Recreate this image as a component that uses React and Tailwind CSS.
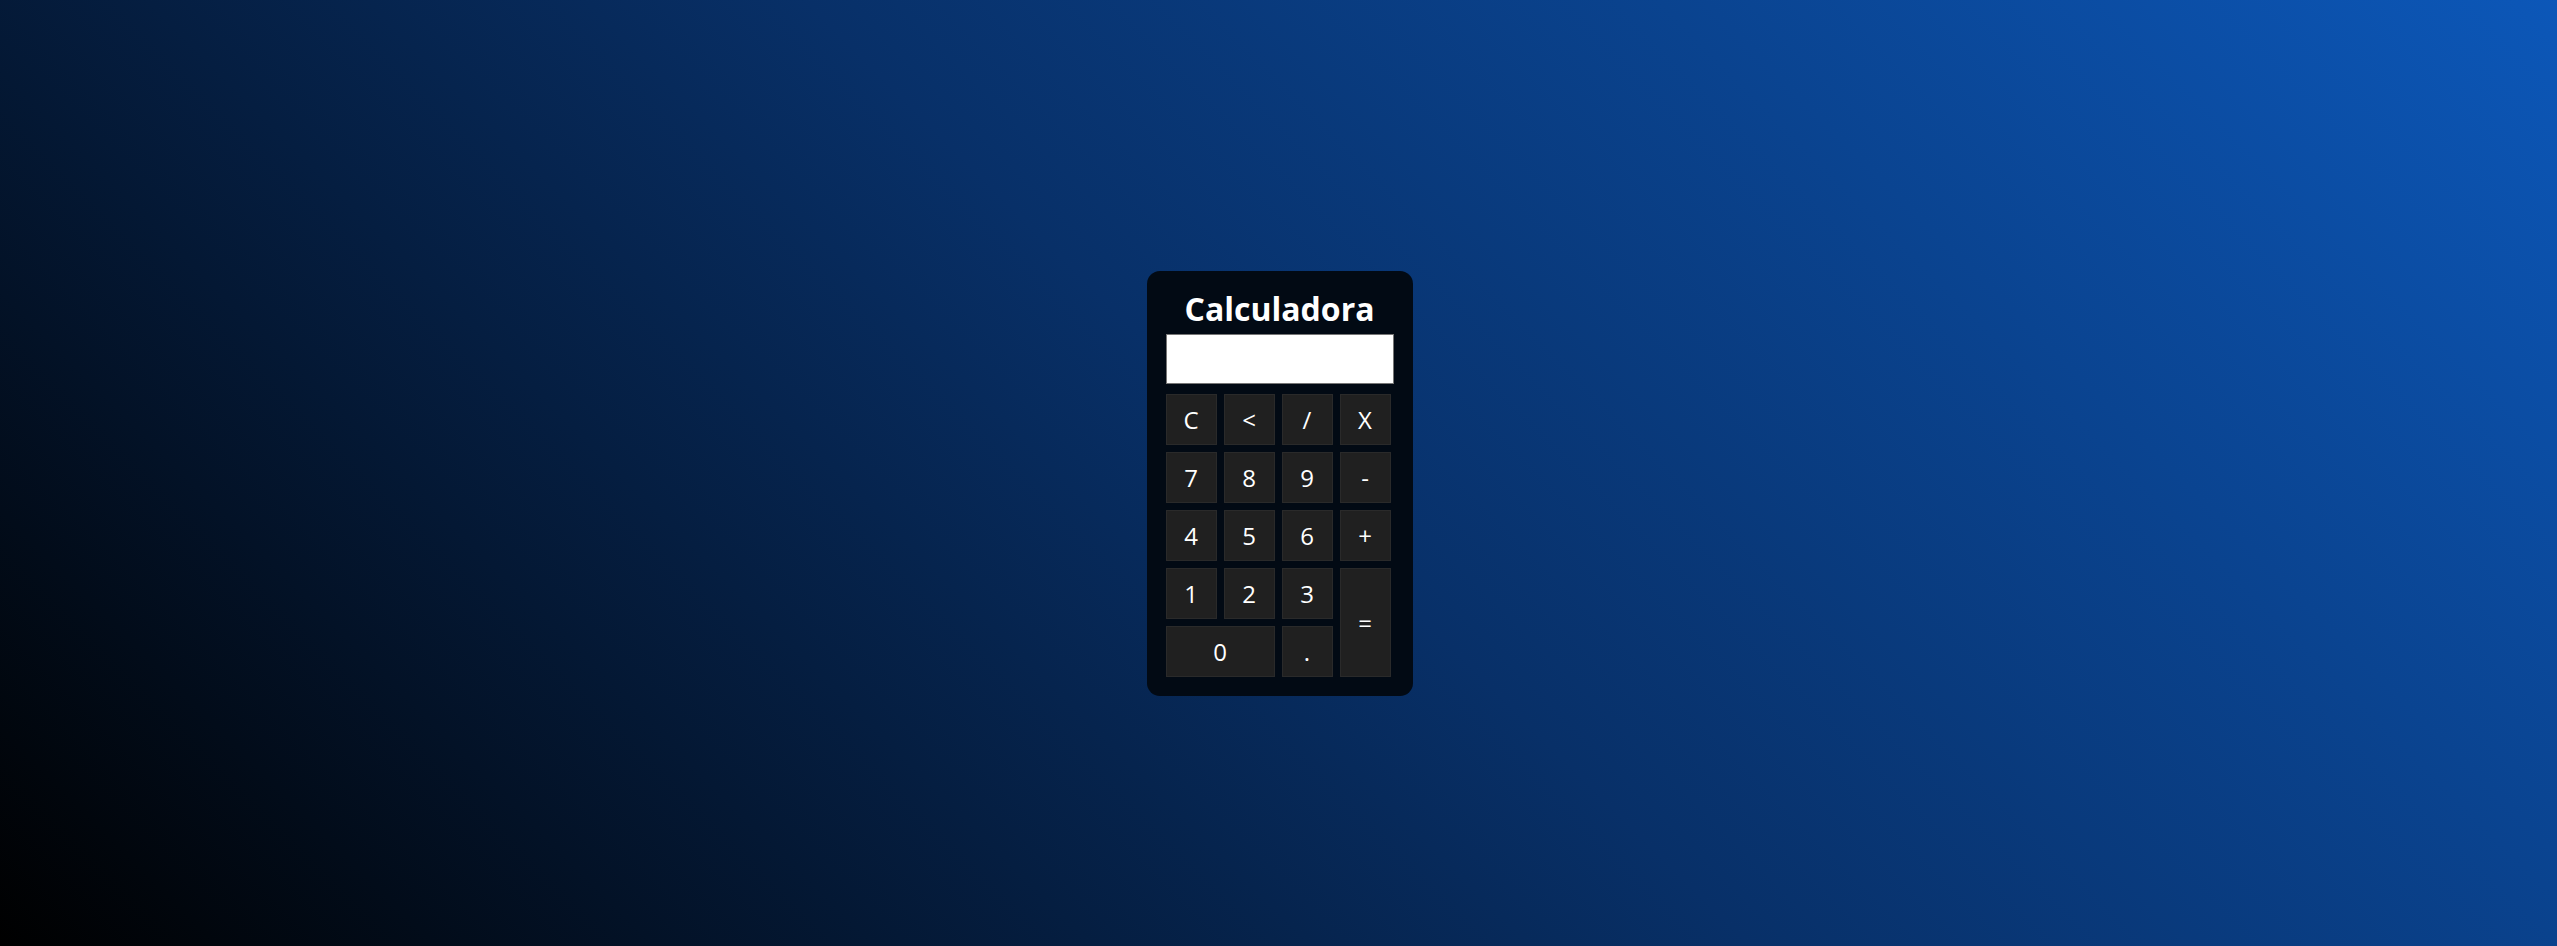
import React, { useState } from "react";

const keys = [
  { label: "C", cls: "" },
  { label: "<", cls: "" },
  { label: "/", cls: "" },
  { label: "X", cls: "" },
  { label: "7", cls: "" },
  { label: "8", cls: "" },
  { label: "9", cls: "" },
  { label: "-", cls: "" },
  { label: "4", cls: "" },
  { label: "5", cls: "" },
  { label: "6", cls: "" },
  { label: "+", cls: "" },
  { label: "1", cls: "" },
  { label: "2", cls: "" },
  { label: "3", cls: "" },
  { label: "=", cls: "row-span-2 h-auto" },
  { label: "0", cls: "col-span-2 w-auto" },
  { label: ".", cls: "" },
];

export default function App() {
  const [display, setDisplay] = useState("");

  const press = (k) => {
    if (k === "C") return setDisplay("");
    if (k === "<") return setDisplay((d) => d.slice(0, -1));
    if (k === "=") {
      try {
        // eslint-disable-next-line no-new-func
        const r = Function(`return (${display.replace(/X/g, "*")})`)();
        setDisplay(String(r));
      } catch {
        setDisplay("Erro");
      }
      return;
    }
    setDisplay((d) => d + k);
  };

  return (
    <div className="min-h-screen w-full flex items-center justify-center pt-[21px] bg-[linear-gradient(45deg,#000000_0%,#083068_50%,#0c57b8_100%)] font-['Open_Sans',sans-serif]">
      {/* card */}
      <div className="ml-[2px] w-[266px] bg-[#020a14] rounded-[13px] px-[19px] pt-[16px] pb-[19px]">
        <h1 className="text-white text-[32px] font-bold leading-[44px] text-center">
          Calculadora
        </h1>

        <input
          type="text"
          value={display}
          readOnly
          className="mt-[3px] w-full h-[50px] bg-white border border-[#767676] px-2 text-[24px] text-black outline-none"
        />

        <div className="mt-[10px] grid grid-cols-[repeat(4,51px)] auto-rows-[51px] gap-[7px]">
          {keys.map((k) => (
            <button
              key={k.label}
              onClick={() => press(k.label)}
              className={`bg-[#202020] border border-[#2a2a2a] text-white text-[24px] flex items-center justify-center ${k.cls}`}
            >
              {k.label}
            </button>
          ))}
        </div>
      </div>
    </div>
  );
}
